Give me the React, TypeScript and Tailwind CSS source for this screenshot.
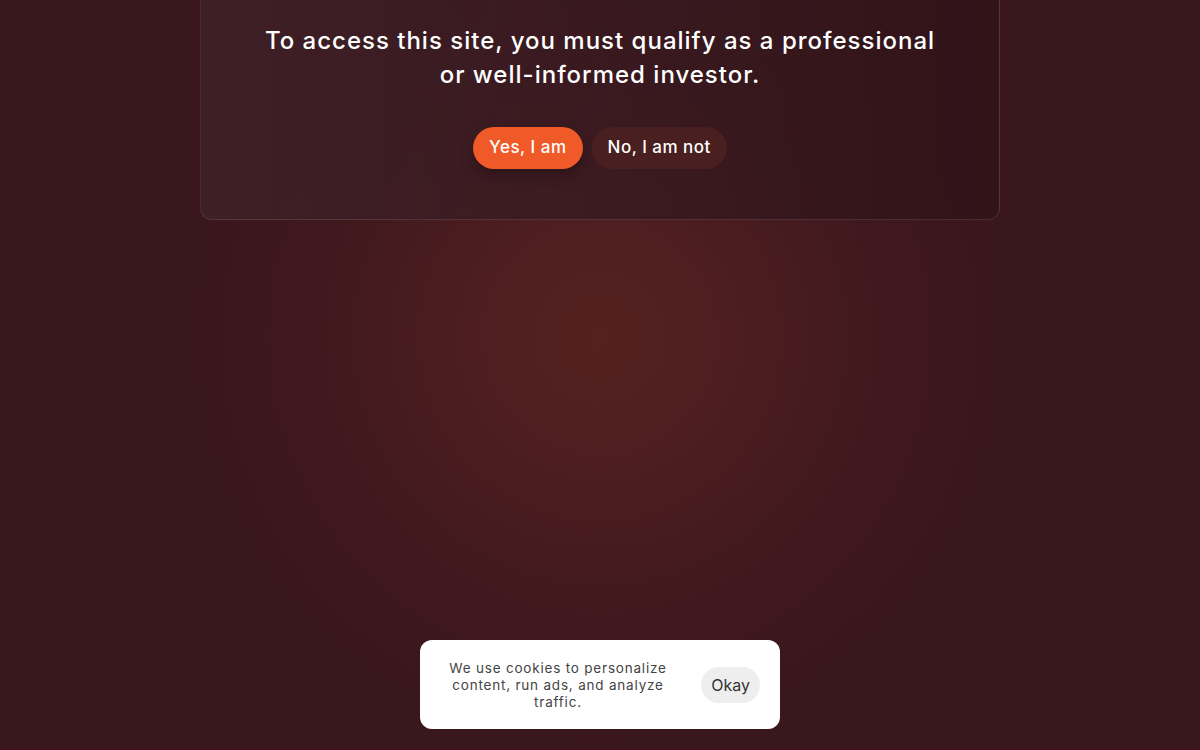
export default function App() {
  return (
    <div
      className="relative w-full h-[750px] overflow-hidden bg-[#3a161d] font-['Inter',sans-serif]"
      style={{
        backgroundImage:
          'radial-gradient(circle at 50% 45%, #55211f 0%, #4c1d20 20%, #40191e 38%, #3a161d 55%)',
      }}
    >
      <div className="flex justify-center">
        <div className="w-[800px] h-[220px] rounded-b-xl border border-t-0 border-white/10 bg-gradient-to-r from-[#3f2128]/90 via-[#381a20]/80 to-[#301418]/90 flex flex-col items-center pt-[24px]">
          <h1 className="text-white text-[24px] leading-[34px] tracking-[1px] text-center font-medium max-w-[720px]">
            To access this site, you must qualify as a professional
            <br />
            or well-informed investor.
          </h1>
          <div className="flex gap-[9px] mt-[35px]">
            <button className="h-[42px] px-4 rounded-full bg-[#f05a28] text-white text-[17px] font-medium tracking-[0.5px] shadow-[0_6px_14px_rgba(0,0,0,0.25)]">
              Yes, I am
            </button>
            <button className="h-[42px] px-4 rounded-full bg-[#4a1f1f] text-white text-[17px] font-medium tracking-[0.5px]">
              No, I am not
            </button>
          </div>
        </div>
      </div>

      <div className="absolute left-[420px] top-[640px] w-[360px] h-[89px] rounded-xl bg-white flex items-center pl-[24px] pr-5">
        <p className="w-[228px] mt-[2px] text-center text-[13.5px] leading-[17px] tracking-[0.8px] text-[#444]">
          We use cookies to personalize content, run ads, and analyze traffic.
        </p>
        <button className="ml-auto h-[36px] px-[10px] rounded-full bg-[#eeeeee] text-[#333] text-[16px]">
          Okay
        </button>
      </div>
    </div>
  )
}
